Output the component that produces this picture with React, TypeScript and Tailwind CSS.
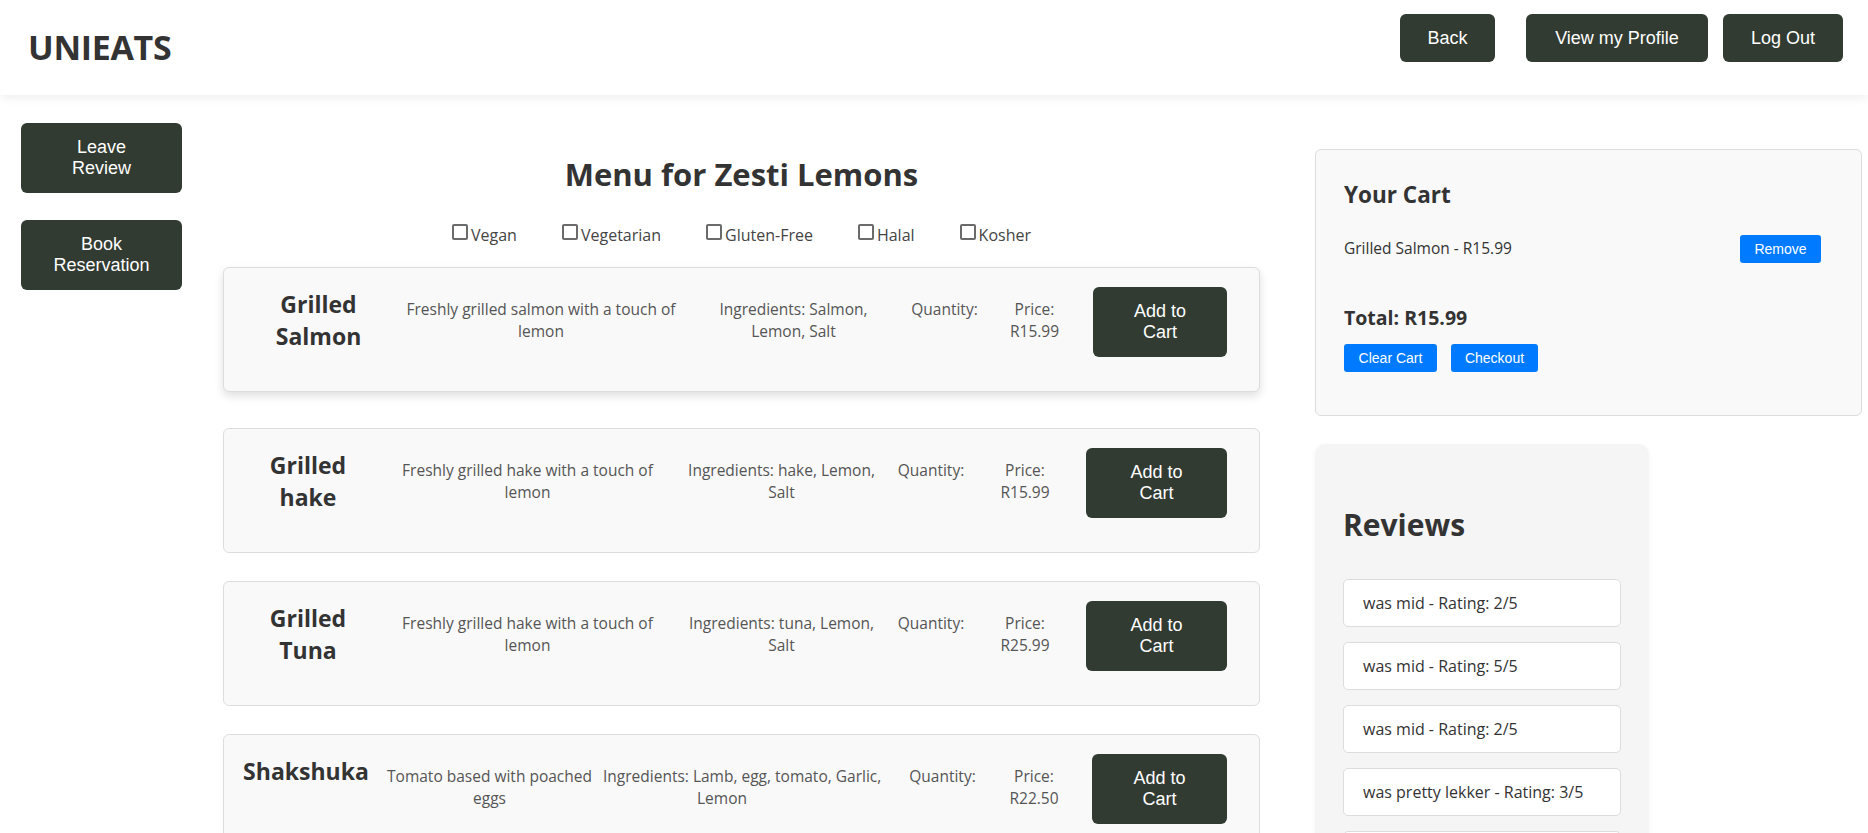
import React from 'react';

type Col = { ml: string; w: string };

type MenuItem = {
  name: string[];
  desc: string[];
  ingredients: string[];
  price: string;
  cols: Col[];
  lifted?: boolean;
};

const COLS_A: Col[] = [
  { ml: 'ml-[43px]', w: 'w-[103px]' },
  { ml: 'ml-[27px]', w: 'w-[288px]' },
  { ml: 'ml-[26px]', w: 'w-[165px]' },
  { ml: 'ml-[26px]', w: 'w-[85px]' },
  { ml: 'ml-[13px]', w: 'w-[69px]' },
  { ml: 'ml-[24px]', w: 'w-[134px]' },
];

const COLS_B: Col[] = [
  { ml: 'ml-[36px]', w: 'w-[96px]' },
  { ml: 'ml-[36px]', w: 'w-[271px]' },
  { ml: 'ml-[17px]', w: 'w-[203px]' },
  { ml: 'ml-[5px]', w: 'w-[86px]' },
  { ml: 'ml-[15px]', w: 'w-[72px]' },
  { ml: 'ml-[25px]', w: 'w-[141px]' },
];

const COLS_C: Col[] = [
  { ml: 'ml-[11px]', w: 'w-[142px]' },
  { ml: 'ml-[1px]', w: 'w-[223px]' },
  { ml: 'ml-[2px]', w: 'w-[238px]' },
  { ml: 'ml-[59px]', w: 'w-[85px]' },
  { ml: 'ml-[14px]', w: 'w-[70px]' },
  { ml: 'ml-[23px]', w: 'w-[135px]' },
];

const menu: MenuItem[] = [
  {
    name: ['Grilled', 'Salmon'],
    desc: ['Freshly grilled salmon with a touch of', 'lemon'],
    ingredients: ['Ingredients: Salmon,', 'Lemon, Salt'],
    price: 'R15.99',
    cols: COLS_A,
    lifted: true,
  },
  {
    name: ['Grilled', 'hake'],
    desc: ['Freshly grilled hake with a touch of', 'lemon'],
    ingredients: ['Ingredients: hake, Lemon,', 'Salt'],
    price: 'R15.99',
    cols: COLS_B,
  },
  {
    name: ['Grilled', 'Tuna'],
    desc: ['Freshly grilled hake with a touch of', 'lemon'],
    ingredients: ['Ingredients: tuna, Lemon,', 'Salt'],
    price: 'R25.99',
    cols: COLS_B,
  },
  {
    name: ['Shakshuka'],
    desc: ['Tomato based with poached', 'eggs'],
    ingredients: ['Ingredients: Lamb, egg, tomato, Garlic,', 'Lemon'],
    price: 'R22.50',
    cols: COLS_C,
  },
];

const filters = ['Vegan', 'Vegetarian', 'Gluten-Free', 'Halal', 'Kosher'];

const reviews = [
  'was mid - Rating: 2/5',
  'was mid - Rating: 5/5',
  'was mid - Rating: 2/5',
  'was pretty lekker - Rating: 3/5',
  'was mid - Rating: 4/5',
];

const darkBtn =
  "bg-[#323b32] text-white font-['Liberation_Sans',Arial,sans-serif] text-[18px] leading-[21px] rounded-[6px]";
const blueBtn =
  "bg-[#007bff] text-white font-['Liberation_Sans',Arial,sans-serif] text-[14px] h-[28px] rounded-[3px]";

function Lines({ lines }: { lines: string[] }) {
  return (
    <>
      {lines.map((l, i) => (
        <span key={i} className="block whitespace-nowrap">
          {l}
        </span>
      ))}
    </>
  );
}

function MenuCard({ item }: { item: MenuItem }) {
  const [name, desc, ingr, qty, price, btn] = item.cols;
  const textCol = 'mt-[12px] text-center text-[15.5px] leading-[21.5px] text-[#555]';
  return (
    <div
      className={
        'flex h-[125px] w-[1037px] items-start rounded-[6px] border border-[#dddddd] bg-[#f9f9f9] pt-[19px] ' +
        (item.lifted ? '-translate-y-2 shadow-[0_4px_10px_rgba(0,0,0,0.13)]' : '')
      }>
      <h3 className={`${name.ml} ${name.w} pt-[1px] text-center text-[23px] font-bold leading-[32px] text-[#333]`}>
        <Lines lines={item.name} />
      </h3>
      <p className={`${desc.ml} ${desc.w} ${textCol}`}>
        <Lines lines={item.desc} />
      </p>
      <p className={`${ingr.ml} ${ingr.w} ${textCol}`}>
        <Lines lines={item.ingredients} />
      </p>
      <p className={`${qty.ml} ${qty.w} ${textCol}`}>Quantity:</p>
      <p className={`${price.ml} ${price.w} ${textCol}`}>
        <Lines lines={['Price:', item.price]} />
      </p>
      <button className={`${btn.ml} ${btn.w} ${darkBtn} h-[70px]`}>
        Add to
        <br />
        Cart
      </button>
    </div>
  );
}

export default function App() {
  return (
    <div className="min-h-screen overflow-hidden bg-white font-['Open_Sans','Noto_Sans',sans-serif] text-[#333]">
      <header className="relative z-10 flex h-[95px] items-center justify-between bg-white pl-[28px] pr-[25px] shadow-[0_2px_10px_rgba(0,0,0,0.08)]">
        <h1 className="text-[34px] font-bold tracking-[-0.3px] text-[#333]">UNIEATS</h1>
        <nav className="flex items-center self-start pt-[14px]">
          <button className={`${darkBtn} mr-[31px] h-[48px] w-[95px]`}>Back</button>
          <button className={`${darkBtn} mr-[15px] h-[48px] w-[182px]`}>View my Profile</button>
          <button className={`${darkBtn} h-[48px] w-[120px]`}>Log Out</button>
        </nav>
      </header>

      <div className="flex items-start">
        <aside className="flex w-[223px] shrink-0 flex-col gap-[27px] pl-[21px] pt-[28px]">
          <button className={`${darkBtn} h-[70px] w-[161px]`}>
            Leave
            <br />
            Review
          </button>
          <button className={`${darkBtn} h-[70px] w-[161px]`}>
            Book
            <br />
            Reservation
          </button>
        </aside>

        <main className="flex w-[1037px] shrink-0 flex-col items-center pt-[58px]">
          <h2 className="text-[31px] font-bold leading-[42px] text-[#333]">Menu for Zesti Lemons</h2>
          <div className="mt-[29px] flex items-center justify-center gap-[45px] text-[16px] leading-[22px] text-[#444]">
            {filters.map((f) => (
              <label key={f} className="flex items-center gap-[3px]">
                <span className="mb-[6px] inline-block h-[16px] w-[16px] rounded-[2px] border-2 border-[#6b6b6b] bg-white" />
                {f}
              </label>
            ))}
          </div>
          <div className="mt-[29px] flex flex-col gap-[28px]">
            {menu.map((m, i) => (
              <MenuCard key={i} item={m} />
            ))}
          </div>
        </main>

        <aside className="ml-[55px] flex w-[547px] shrink-0 flex-col pt-[54px]">
          <section className="h-[267px] rounded-[6px] border border-[#dddddd] bg-[#f9f9f9] pl-[28px] pr-[40px] pt-[30px]">
            <h3 className="text-[22.5px] font-bold leading-[30px] text-[#333]">Your Cart</h3>
            <div className="mt-[26px] flex items-start justify-between">
              <span className="mt-[1px] text-[15.5px] leading-[22px] text-[#333]">Grilled Salmon - R15.99</span>
              <button className={`${blueBtn} mt-[-1px] w-[81px]`}>Remove</button>
            </div>
            <p className="mt-[42px] text-[19.5px] font-bold leading-[26px] text-[#333]">Total: R15.99</p>
            <div className="mt-[13px] flex gap-[14px]">
              <button className={`${blueBtn} w-[93px]`}>Clear Cart</button>
              <button className={`${blueBtn} w-[87px]`}>Checkout</button>
            </div>
          </section>

          <section className="mt-[28px] w-[334px] rounded-[10px] bg-[#f5f5f5] pb-[20px] pl-[28px] pr-[28px] pt-[60px] shadow-[0_2px_6px_rgba(0,0,0,0.04)]">
            <h2 className="text-[30px] font-bold leading-[42px] text-[#333]">Reviews</h2>
            <ul className="mt-[33px] flex flex-col gap-[15px]">
              {reviews.map((r, i) => (
                <li
                  key={i}
                  className="flex h-[48px] items-center rounded-[5px] border border-[#dddddd] bg-white pl-[19px] text-[16px] text-[#333]">
                  {r}
                </li>
              ))}
            </ul>
          </section>
        </aside>
      </div>
    </div>
  );
}
